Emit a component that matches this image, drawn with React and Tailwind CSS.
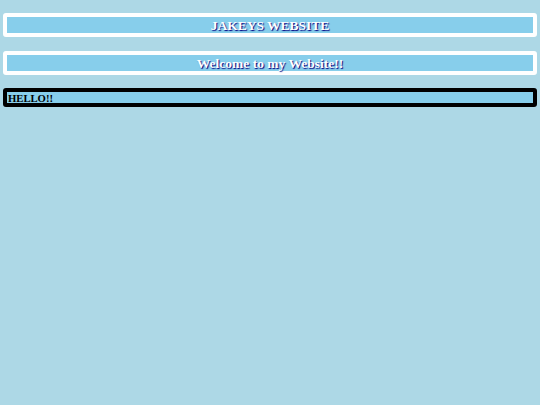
export default function App() {
  return (
    <div className="min-h-[405px] bg-[#add8e6] px-[3px] pt-[13px] font-['Liberation_Serif',serif]">
      <div className="rounded-[3px] border-4 border-white bg-[#87ceeb] pt-[1px] text-center text-[13.5px] font-bold leading-[15px] text-white [text-shadow:1px_1px_1px_#000080]">
        JAKEYS WEBSITE
      </div>
      <div className="mt-[14px] rounded-[3px] border-4 border-white bg-[#87ceeb] pt-[1px] text-center text-[13.5px] font-bold leading-[15px] text-white [text-shadow:1px_1px_1px_#000080]">
        Welcome to my Website!!
      </div>
      <div className="mt-[13px] rounded-[3px] border-4 border-black bg-[#87ceeb] pl-[1px] pt-[1px] text-[10.67px] font-bold leading-[10px] text-black">
        HELLO!!
      </div>
    </div>
  );
}
